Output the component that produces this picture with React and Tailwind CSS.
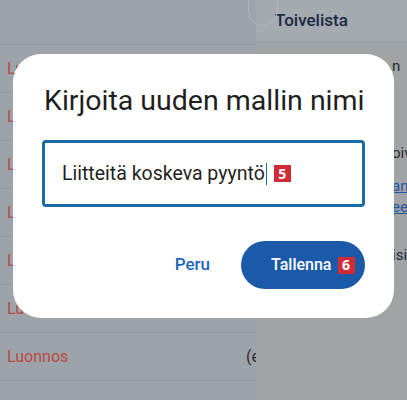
import React from 'react';

const rows = ['Luonnos', 'Luonnos', 'Luonnos', 'Luonnos', 'Luonnos', 'Luonnos', 'Luonnos'];

const Badge = ({ n }) => (
  <span className="inline-flex h-[17px] w-[17px] items-center justify-center bg-[#d12b36] text-[14px] font-bold leading-none text-white font-['Open_Sans',sans-serif]">
    {n}
  </span>
);

const App = () => {
  return (
    <div className="relative flex h-[400px] w-[407px] overflow-hidden font-['Roboto',sans-serif]">
      {/* background list (under scrim) */}
      <div className="flex w-[256px] shrink-0 flex-col bg-[#9da3aa]">
        <div className="relative h-[45px] shrink-0 border-b border-[#959ba2]">
          <div className="absolute right-[-22px] top-[-12px] h-[38px] w-[30px] rounded-full border border-[#b0b5bb]" />
        </div>
        {rows.map((r, i) => (
          <div key={i} className="flex h-[48px] shrink-0 items-center justify-between border-b border-[#959ba2] pl-[7px]">
            <span className="text-[16px] text-[#b94a43]">{r}</span>
            <span className="-mr-[4px] text-[16px] text-[#2a2d31]">(e</span>
          </div>
        ))}
      </div>

      {/* right side panel */}
      <div className="flex min-w-0 flex-1 flex-col bg-[#a1a4a6]">
        <div className="flex h-[42px] shrink-0 items-center border-b border-[#979ca1] bg-[#a4aab0] pl-[19px]">
          <span className="text-[17px] font-medium text-[#1c2945]">Toivelista</span>
        </div>
        <div className="flex flex-col text-[15px] leading-[20px] text-[#26292c]">
          <span className="mt-[14px] h-[20px] pl-[136px]">n</span>
          <span className="mt-[67px] h-[20px] whitespace-nowrap pl-[136px]">oiv</span>
          <span className="mt-[13px] h-[20px] whitespace-nowrap pl-[136px] text-[#1f55a0] underline">an</span>
          <span className="mt-[1px] h-[20px] whitespace-nowrap pl-[136px] text-[#1f55a0] underline">ee</span>
          <span className="mt-[28px] h-[20px] whitespace-nowrap pl-[136px]">isi</span>
        </div>
      </div>

      {/* dialog */}
      <div className="absolute left-[13px] top-[54px] flex h-[264px] w-[381px] flex-col rounded-[28px] bg-white px-[29px] pt-[30px]">
        <h2 className="whitespace-nowrap pl-[2px] text-[28.5px] leading-[34px] text-[#1f1f1f]">Kirjoita uuden mallin nimi</h2>
        <div className="mt-[22px] flex h-[67px] items-center rounded-[4px] border-[3px] border-[#1b6aa6] pl-[17px]">
          <span className="text-[19.5px] text-[#1f1f1f]">Liitteitä koskeva pyyntö</span>
          <span className="ml-[1px] h-[22px] w-[1px] bg-[#1b6aa6]" />
          <span className="ml-[7px] flex"><Badge n="5" /></span>
        </div>
        <div className="mt-[34px] flex items-center justify-end">
          <button className="mr-[31px] text-[17px] font-medium text-[#1a66b8]">Peru</button>
          <button className="flex h-[48px] w-[124px] items-center gap-[6px] rounded-full bg-[#1a5aa8] pl-[30px] text-[16px] font-medium text-white">
            Tallenna
            <Badge n="6" />
          </button>
        </div>
      </div>
    </div>
  );
};

export default App;
